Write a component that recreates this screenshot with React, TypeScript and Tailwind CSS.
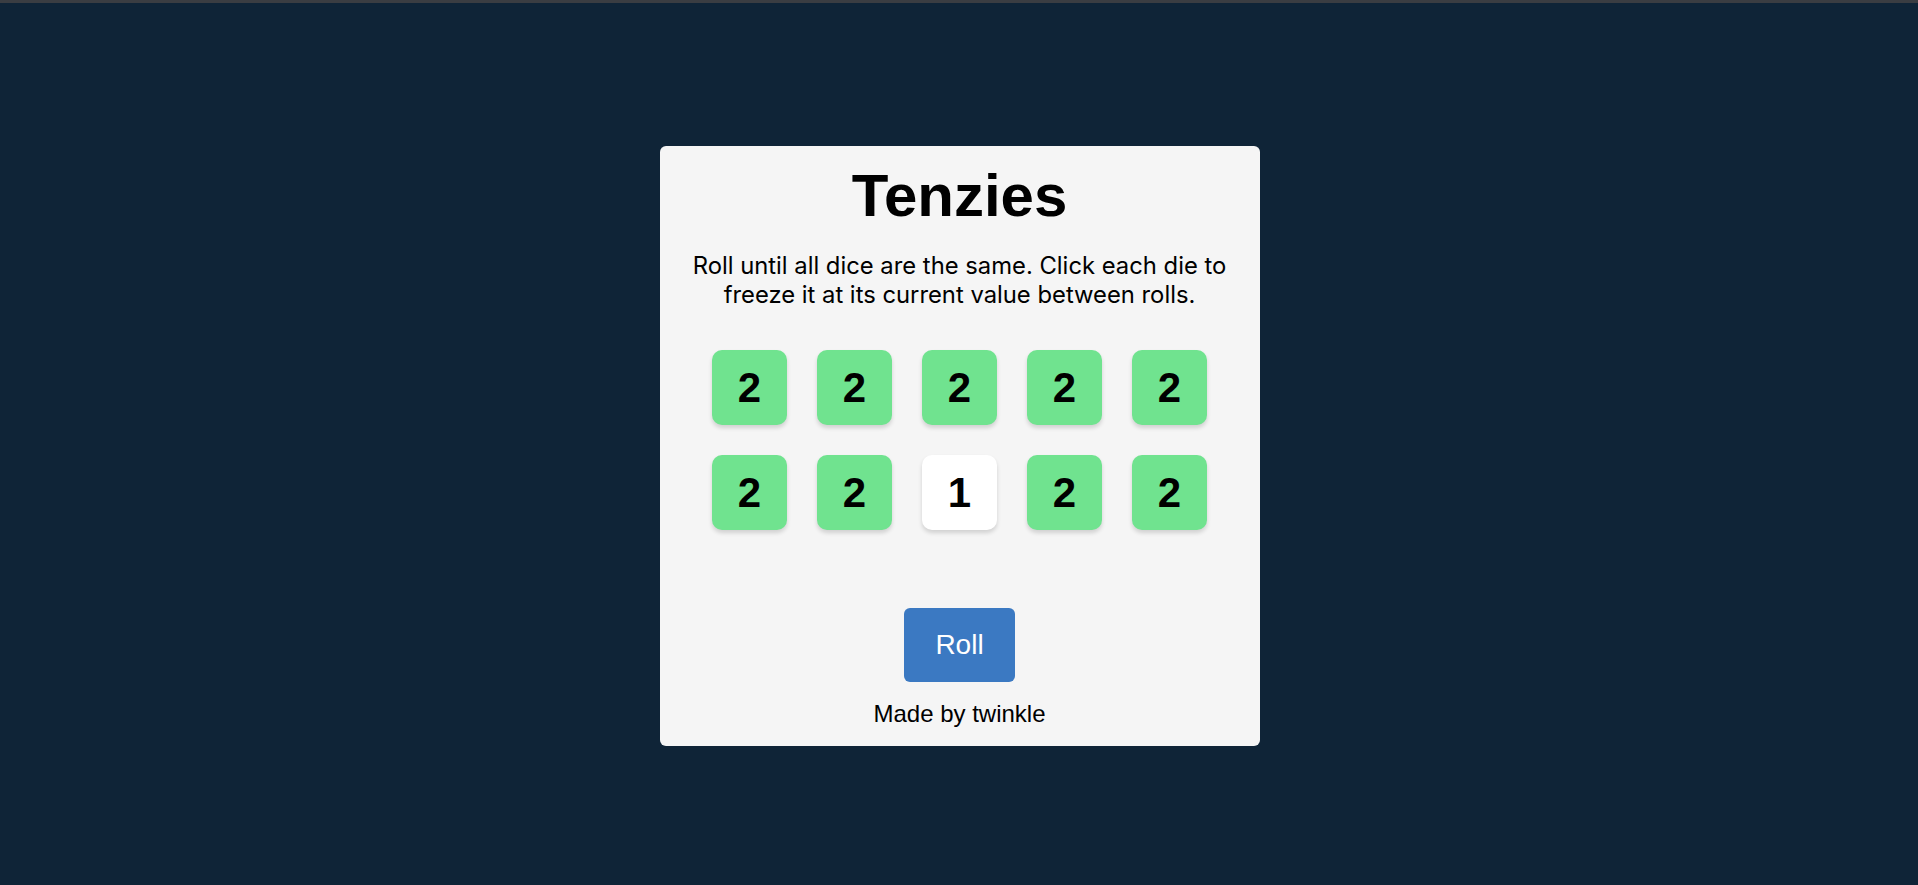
import { useState } from 'react';

type Die = { id: number; value: number; held: boolean };

const initialDice: Die[] = [2, 2, 2, 2, 2, 2, 2, 1, 2, 2].map((value, i) => ({
    id: i,
    value,
    held: value === 2,
}));

export default function App() {
    const [dice, setDice] = useState<Die[]>(initialDice);

    function hold(id: number) {
        setDice(prev => prev.map(d => (d.id === id ? { ...d, held: !d.held } : d)));
    }

    function roll() {
        setDice(prev => prev.map(d => (d.held ? d : { ...d, value: Math.ceil(Math.random() * 6) })));
    }

    return (
        <div className="min-h-screen bg-[#0f2437] flex flex-col">
            <div className="h-[3px] bg-[#3a3d42]" />
            <main className="flex justify-center pt-[143px] pl-[1px]">
                {/* Game card */}
                <div className="w-[600px] h-[600px] bg-[#f5f5f5] rounded-md flex flex-col items-center px-[20px] pt-[20px] pb-[20px]">
                    <h1 className="font-['Liberation_Sans',Arial,sans-serif] font-bold text-[60px] leading-none text-black">
                        Tenzies
                    </h1>
                    <p className="mt-[25px] font-['Inter',sans-serif] text-[23.8px] leading-[29px] text-black text-center">
                        Roll until all dice are the same. Click each die to freeze it at its current value between rolls.
                    </p>

                    <div className="mt-[41px] grid grid-cols-5 gap-[30px]">
                        {dice.map(d => (
                            <button
                                key={d.id}
                                onClick={() => hold(d.id)}
                                className={`w-[75px] h-[75px] rounded-[10px] flex items-center justify-center shadow-[0_3px_4px_rgba(0,0,0,0.15)] font-['Liberation_Sans',Arial,sans-serif] font-bold text-[42px] leading-none text-black ${
                                    d.held ? 'bg-[#70e38f]' : 'bg-white'
                                }`}
                            >
                                {d.value}
                            </button>
                        ))}
                    </div>

                    <button
                        onClick={roll}
                        className="mt-[78px] w-[111px] h-[75px] rounded-md bg-[#3b79c2] text-white font-['Liberation_Sans',Arial,sans-serif] text-[28px] leading-none"
                    >
                        Roll
                    </button>

                    <p className="mt-[20px] font-['Liberation_Sans',Arial,sans-serif] text-[24px] leading-none text-black">
                        Made by twinkle
                    </p>
                </div>
            </main>
        </div>
    );
}
